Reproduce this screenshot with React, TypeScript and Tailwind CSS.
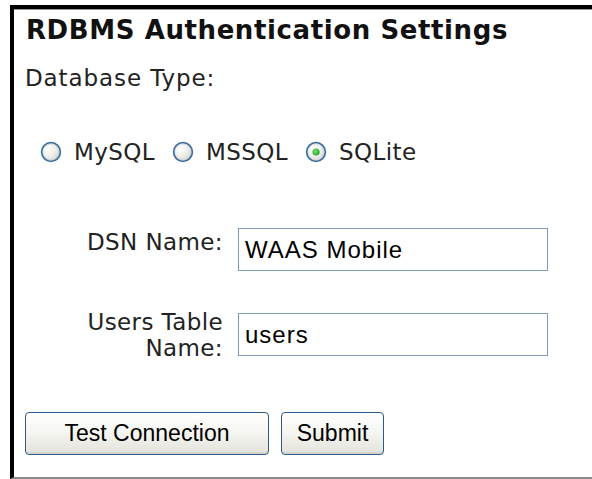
import { FC } from "react";

const verdana = { fontFamily: '"DejaVu Sans", Verdana, sans-serif' };

interface RadioProps {
  label: string;
  checked?: boolean;
}

// XP-style radio button: blue ring, soft grey fill, green dot when on
const Radio: FC<RadioProps> = ({ label, checked }) => {
  return (
    <label className="flex items-center">
      <svg width="22" height="22" viewBox="0 0 22 22" className="shrink-0">
        <defs>
          <radialGradient id="radioFill" cx="35%" cy="35%" r="75%">
            <stop offset="0%" stopColor="#ffffff" />
            <stop offset="60%" stopColor="#ebebe6" />
            <stop offset="100%" stopColor="#cfcfc8" />
          </radialGradient>
          <radialGradient id="radioDot" cx="40%" cy="40%" r="70%">
            <stop offset="0%" stopColor="#6fe46f" />
            <stop offset="100%" stopColor="#1f9a1f" />
          </radialGradient>
        </defs>
        <circle
          cx="11"
          cy="11"
          r="9.3"
          fill="url(#radioFill)"
          stroke="#3d6d99"
          strokeWidth="1.8"
        />
        <circle cx="11" cy="11" r="8.2" fill="none" stroke="#b9c9d8" strokeWidth="0.6" />
        {checked && <circle cx="11" cy="11" r="3.6" fill="url(#radioDot)" />}
      </svg>
      <span className="ml-[12px] text-[23px] leading-[26px] tracking-[0.4px] text-[#222]">
        {label}
      </span>
    </label>
  );
};

interface FieldProps {
  label: React.ReactNode;
  value: string;
  labelOffset?: string;
  inputOffset?: string;
}

const Field: FC<FieldProps> = ({ label, value, labelOffset, inputOffset }) => {
  return (
    <div className="flex items-start">
      <div
        className={`w-[209px] text-right text-[23px] leading-[26px] tracking-[0.4px] text-[#222] ${labelOffset ?? ""}`}
      >
        {label}
      </div>
      <div
        className={`ml-[15px] flex h-[43px] w-[310px] items-center border border-[#7f9db9] bg-white pl-[6px] text-[24px] tracking-[1px] text-black ${inputOffset ?? ""}`}
        style={{ fontFamily: '"Liberation Sans", Arial, sans-serif' }}
      >
        {value}
      </div>
    </div>
  );
};

const XpButton: FC<{ text: string; width: string }> = ({ text, width }) => {
  return (
    <button
      className={`flex h-[43px] ${width} items-center justify-center rounded-[4px] border border-[#2b5a8c] bg-gradient-to-b from-[#ffffff] via-[#f4f4f0] to-[#e3e2da] text-[23px] text-black shadow-[inset_0_-2px_0_#d6d5cc]`}
      style={{ fontFamily: '"Liberation Sans", Arial, sans-serif' }}
    >
      {text}
    </button>
  );
};

export default function App() {
  return (
    <div className="h-[479px] w-[592px] overflow-hidden bg-white">
      <div
        className="ml-[10px] mt-[5px] flex h-[474px] flex-col border-l-4 border-t-4 border-b-2 border-black border-b-[#8a8a8a] pl-[12px]"
        style={verdana}
      >
        <div className="border-t border-[#9a9a9a] -ml-[12px]" />
        <h2 className="mt-[5px] text-[26px] font-bold leading-[30px] tracking-[0.6px] text-[#111]">
          RDBMS Authentication Settings
        </h2>
        <p className="mt-[20px] -ml-px text-[23px] leading-[26px] tracking-[0.9px] text-[#222]">
          Database Type:
        </p>
        <div className="mt-[48px] ml-[14px] flex items-center">
          <Radio label="MySQL" />
          <div className="w-[17px]" />
          <Radio label="MSSQL" />
          <div className="w-[17px]" />
          <Radio label="SQLite" checked />
        </div>
        <div className="-ml-[12px] mt-[63px] flex flex-col">
          <Field label="DSN Name:" value="WAAS Mobile" labelOffset="mt-[1px]" />
          <div className="mt-[38px]">
            <Field
              label={
                <>
                  Users Table
                  <br />
                  Name:
                </>
              }
              value="users"
              inputOffset="mt-[4px]"
            />
          </div>
        </div>
        <div className="mt-[51px] -ml-px flex gap-[12px]">
          <XpButton text="Test Connection" width="w-[244px]" />
          <XpButton text="Submit" width="w-[103px]" />
        </div>
      </div>
    </div>
  );
}
